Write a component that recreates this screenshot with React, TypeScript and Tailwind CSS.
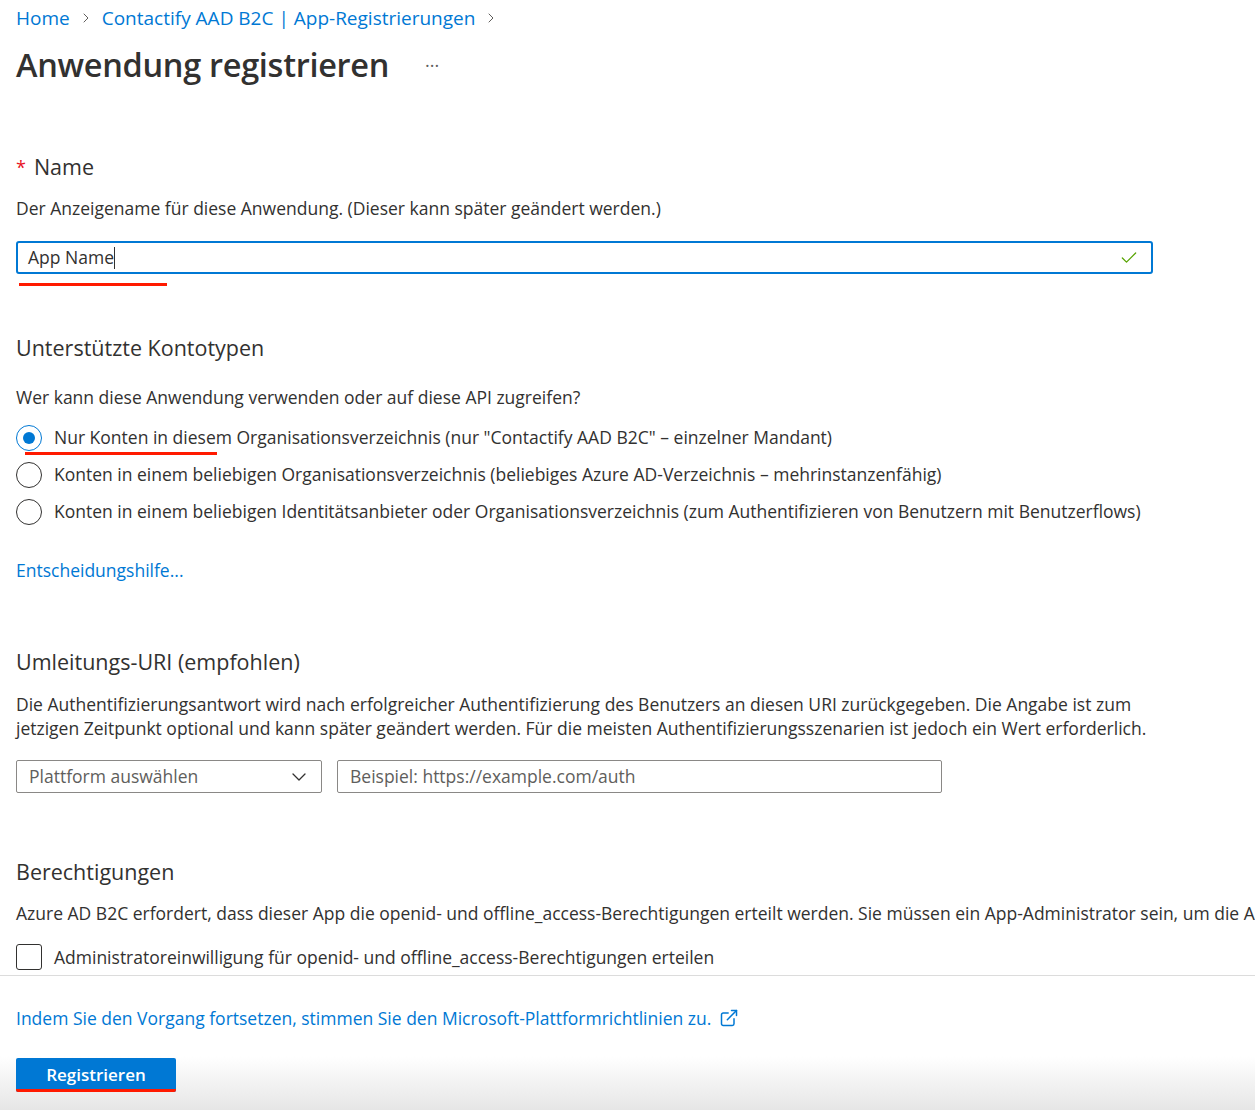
import React, { useState } from "react";
import { ChevronRight, ChevronDown, Check, ExternalLink } from "lucide-react";

const font = { fontFamily: '"Open Sans", "Liberation Sans", sans-serif' };

const accountTypes = [
  'Nur Konten in diesem Organisationsverzeichnis (nur "Contactify AAD B2C" – einzelner Mandant)',
  "Konten in einem beliebigen Organisationsverzeichnis (beliebiges Azure AD-Verzeichnis – mehrinstanzenfähig)",
  "Konten in einem beliebigen Identitätsanbieter oder Organisationsverzeichnis (zum Authentifizieren von Benutzern mit Benutzerflows)",
];

export default function App() {
  const [selected, setSelected] = useState(0);
  const [consent, setConsent] = useState(false);

  return (
    <div className="w-full h-[1110px] overflow-hidden bg-white text-[#323130] flex flex-col" style={font}>
      <div className="px-4 flex flex-col">
        {/* Breadcrumb */}
        <div className="flex items-center gap-2 h-[36px] text-[19px] text-[#0078d4]">
          <span>Home</span>
          <ChevronRight className="w-4 h-4 text-[#605e5c]" strokeWidth={1.5} />
          <span>Contactify AAD B2C | App-Registrierungen</span>
          <ChevronRight className="w-4 h-4 text-[#605e5c]" strokeWidth={1.5} />
        </div>

        {/* Title */}
        <div className="flex items-center h-[58px]">
          <h1 className="text-[32.5px] font-semibold tracking-[-0.3px]">Anwendung registrieren</h1>
          <span className="ml-9 text-[18px] text-[#605e5c]">···</span>
        </div>

        {/* Name */}
        <div className="mt-[58px] flex items-center text-[21.5px] h-[30px]">
          <span className="text-[#e81123] mr-2 text-[18px]">*</span>
          <span>Name</span>
        </div>
        <p className="mt-[14px] text-[17.5px] h-[24px] leading-[24px]">
          Der Anzeigename für diese Anwendung. (Dieser kann später geändert werden.)
        </p>
        <div className="mt-[21px] w-[1137px] h-[33px] border-2 border-[#0078d4] rounded-[3px] flex items-center px-[10px]">
          <span className="text-[17.5px]">App Name</span>
          <span className="w-px h-[22px] bg-[#323130]" />
          <Check className="ml-auto mr-[2px] w-[20px] h-[20px] text-[#57a300]" strokeWidth={1.5} />
        </div>
        <div className="mt-[9px] ml-[3px] w-[148px] h-[3px] bg-[#ff1a00]" />

        {/* Kontotypen */}
        <h2 className="mt-[47px] text-[21.5px] h-[30px] leading-[30px]">Unterstützte Kontotypen</h2>
        <p className="mt-[22px] text-[17.5px] h-[24px] leading-[24px]">
          Wer kann diese Anwendung verwenden oder auf diese API zugreifen?
        </p>
        <div className="mt-[10px] flex flex-col">
          {accountTypes.map((label, i) => (
            <div key={i} className="flex flex-col">
              <label
                className="flex items-center h-[37px] cursor-pointer text-[17.5px]"
                onClick={() => setSelected(i)}
              >
                <span
                  className={`w-[26px] h-[26px] rounded-full border-[1.5px] flex items-center justify-center shrink-0 ${
                    selected === i ? "border-[#0078d4]" : "border-[#323130]"
                  }`}
                >
                  {selected === i && <span className="w-[12px] h-[12px] rounded-full bg-[#0078d4]" />}
                </span>
                <span className="ml-[12px] whitespace-nowrap">{label}</span>
              </label>
              {i === 0 && <div className="-mt-[4px] mb-[1px] ml-[9px] w-[192px] h-[3px] bg-[#ff1a00]" />}
            </div>
          ))}
        </div>
        <a className="mt-[28px] text-[17.5px] text-[#0078d4] h-[24px] leading-[24px]">Entscheidungshilfe...</a>

        {/* Umleitungs-URI */}
        <h2 className="mt-[65px] text-[21.5px] h-[30px] leading-[30px]">Umleitungs-URI (empfohlen)</h2>
        <p className="mt-[15px] max-w-[1150px] text-[17.5px] leading-[24px]">
          Die Authentifizierungsantwort wird nach erfolgreicher Authentifizierung des Benutzers an diesen URI
          zurückgegeben. Die Angabe ist zum jetzigen Zeitpunkt optional und kann später geändert werden. Für die
          meisten Authentifizierungsszenarien ist jedoch ein Wert erforderlich.
        </p>
        <div className="mt-[20px] flex items-center gap-[15px]">
          <div className="w-[306px] h-[33px] border border-[#8a8886] rounded-[2px] flex items-center px-[12px] text-[17.5px] text-[#605e5c]">
            <span>Plattform auswählen</span>
            <ChevronDown className="ml-auto -mr-[2px] w-[24px] h-[24px] text-[#323130]" strokeWidth={1.3} />
          </div>
          <div className="w-[605px] h-[33px] border border-[#8a8886] rounded-[2px] flex items-center px-[12px] text-[17.5px] text-[#605e5c]">
            Beispiel: https://example.com/auth
          </div>
        </div>

        {/* Berechtigungen */}
        <h2 className="mt-[64px] text-[21.5px] h-[30px] leading-[30px]">Berechtigungen</h2>
        <p className="mt-[14px] text-[17.5px] h-[24px] leading-[24px] whitespace-nowrap">
          Azure AD B2C erfordert, dass dieser App die openid- und offline_access-Berechtigungen erteilt werden. Sie
          müssen ein App-Administrator sein, um die Administratoreinwilligung zu erteilen.
        </p>
        <label
          className="mt-[14px] flex items-center h-[36px] cursor-pointer text-[17.5px]"
          onClick={() => setConsent(!consent)}
        >
          <span className="w-[26px] h-[26px] border-[1.5px] border-[#323130] rounded-[3px] flex items-center justify-center shrink-0">
            {consent && <Check className="w-4 h-4" />}
          </span>
          <span className="ml-[12px]">Administratoreinwilligung für openid- und offline_access-Berechtigungen erteilen</span>
        </label>
      </div>

      {/* Footer */}
      <div className="flex-1 border-t border-[#dcdcdc] px-4 bg-linear-to-b from-white from-60% to-[#e6e6e6] flex flex-col">
        <a className="mt-[30px] flex items-center gap-2 text-[17.5px] text-[#0078d4] h-[24px]">
          Indem Sie den Vorgang fortsetzen, stimmen Sie den Microsoft-Plattformrichtlinien zu.
          <ExternalLink className="w-[20px] h-[20px]" strokeWidth={1.8} />
        </a>
        <button className="mt-[28px] w-[160px] h-[34px] bg-[#0078d4] rounded-[2px] text-white text-[17px] font-semibold flex flex-col items-center justify-end overflow-hidden">
          <span className="mb-[2px]">Registrieren</span>
          <span className="w-full h-[3px] bg-[#ff1a00]" />
        </button>
      </div>
    </div>
  );
}
